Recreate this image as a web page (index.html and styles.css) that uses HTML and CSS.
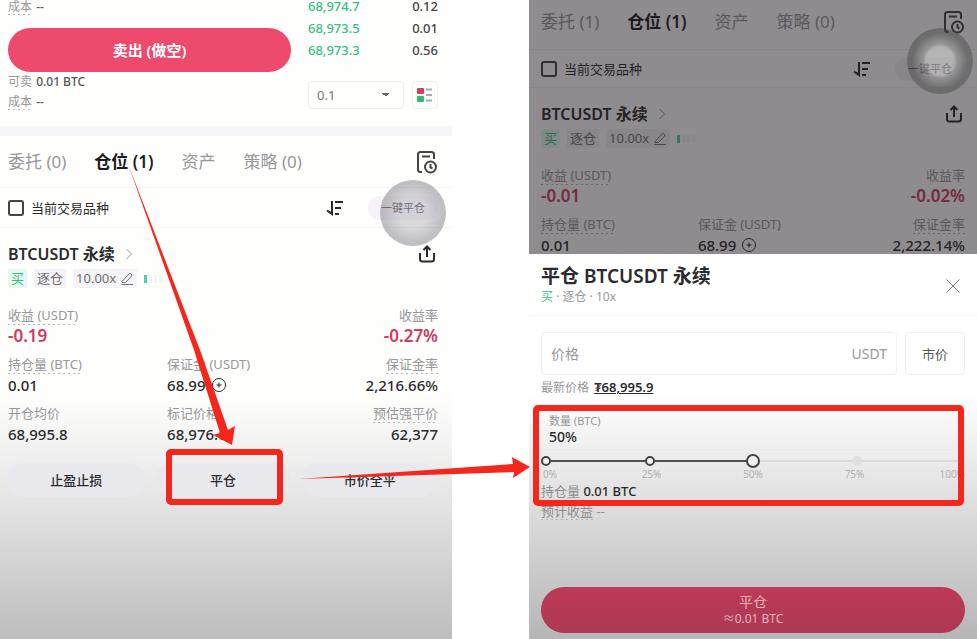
FILE: index.html
```html
<!DOCTYPE html>
<html lang="zh-CN">
<head>
    <meta charset="UTF-8">
    <meta name="viewport" content="width=device-width, initial-scale=1.0">
    <title>平仓 BTCUSDT 永续</title>
    <link rel="stylesheet" href="styles.css">
</head>
<body>

    <!-- shared icons -->
    <svg class="sprite" aria-hidden="true">
      <symbol id="i-history" viewBox="0 0 22 24">
        <path d="M6 22H4.500Q2 22 2 19.500V4.500Q2 2 4.500 2H15.500Q18 2 18 4.500V9M6 6.500H14" />
        <circle cx="14.500" cy="17" r="5.500" />
        <path d="M14.500 14V17.500L16.500 18.500" />
      </symbol>
      <symbol id="i-sort" viewBox="0 0 18 16">
        <path d="M6 1V14L1 10.500M6 14L3 11.500M9 2H17M9 8H15M9 14H13" />
      </symbol>
      <symbol id="i-share" viewBox="0 0 18 18">
        <path d="M2 8V14Q2 16.500 4.500 16.500H13.500Q16 16.500 16 14V8M9 12V2M5.500 5L9 1.500L12.500 5" />
      </symbol>
      <symbol id="i-edit" viewBox="0 0 14 14">
        <path d="M1.500 12.500H13M2 9.500L9 2Q10 1 11.200 2T11.300 4.300L5.500 10.500H2Z" />
      </symbol>
      <symbol id="i-chevron" viewBox="0 0 8 12">
        <path d="M1.500 1L6.500 6L1.500 11" />
      </symbol>
      <symbol id="i-add" viewBox="0 0 16 16">
        <circle cx="8" cy="8" r="6.500" />
        <path d="M5.500 8H10.500M8 5.500V10.500" />
      </symbol>
      <symbol id="i-close" viewBox="0 0 16 16">
        <path d="M1.500 1.500L14.500 14.500M14.500 1.500L1.500 14.500" />
      </symbol>
    </svg>

    <main class="board">

      <section class="phone phone-left">
        <div class="trade">
          <div class="order-side">
            <p class="line"><span class="hint">成本</span> <b>--</b></p>
            <button class="sell" type="button">卖出 (做空)</button>
            <p class="line"><span>可卖</span> <b>0.01 BTC</b></p>
            <p class="line"><span class="hint">成本</span> <b>--</b></p>
          </div>
          <div class="book">
            <table class="depth">
              <tr><td>68,974.7</td><td>0.12</td></tr>
              <tr><td>68,973.5</td><td>0.01</td></tr>
              <tr><td>68,973.3</td><td>0.56</td></tr>
            </table>
            <div class="book-tools">
              <select class="step" aria-label="深度"><option>0.1</option></select>
              <button class="layout-btn" type="button" aria-label="盘口样式">
                <svg width="16" height="16" viewBox="0 0 16 16">
                  <rect x="0" y="1" width="7" height="6" rx="1" fill="#d33f60" />
                  <rect x="0" y="9" width="7" height="6" rx="1" fill="#35b877" />
                  <path d="M9 2.500H15M9 8H15M9 13.500H15" stroke="#aaa" stroke-width="2" />
                </svg>
              </button>
            </div>
          </div>
        </div>

        <nav class="tabs">
          <button type="button">委托 (0)</button>
          <button type="button" class="active">仓位 (1)</button>
          <button type="button">资产</button>
          <button type="button">策略 (0)</button>
          <button type="button" class="history" aria-label="历史"><svg class="icon" width="22" height="24"><use href="#i-history" /></svg></button>
        </nav>

        <div class="filter">
          <label><input type="checkbox"> 当前交易品种</label>
          <button type="button" class="sort" aria-label="排序"><svg class="icon" width="18" height="16"><use href="#i-sort" /></svg></button>
          <button type="button" class="close-all">一键平仓</button>
          <span class="touch"></span>
        </div>

        <article class="position">
          <header>
            <a href="#">BTCUSDT 永续 <svg class="icon chevron" width="8" height="12"><use href="#i-chevron" /></svg></a>
            <button type="button" aria-label="分享"><svg class="icon" width="18" height="18"><use href="#i-share" /></svg></button>
          </header>
          <div class="tags">
            <span class="buy">买</span>
            <span>逐仓</span>
            <button type="button">10.00x <svg class="icon" width="14" height="14"><use href="#i-edit" /></svg></button>
            <i class="risk"></i>
          </div>
          <dl class="stats">
            <div><dt class="hint">收益 (USDT)</dt><dd class="loss">-0.19</dd></div>
            <div class="end"><dt>收益率</dt><dd class="loss">-0.27%</dd></div>
            <div><dt class="hint">持仓量 (BTC)</dt><dd>0.01</dd></div>
            <div><dt>保证金 (USDT)</dt><dd>68.99 <svg class="icon" width="16" height="16"><use href="#i-add" /></svg></dd></div>
            <div class="end"><dt class="hint">保证金率</dt><dd>2,216.66%</dd></div>
            <div><dt>开仓均价</dt><dd>68,995.8</dd></div>
            <div><dt>标记价格</dt><dd>68,976.6</dd></div>
            <div class="end"><dt class="hint">预估强平价</dt><dd>62,377</dd></div>
          </dl>
          <div class="actions">
            <button type="button">止盈止损</button>
            <button type="button">平仓</button>
            <button type="button">市价全平</button>
          </div>
        </article>
      </section>

      <section class="phone phone-right">
        <div class="behind">
          <nav class="tabs">
            <button type="button">委托 (1)</button>
            <button type="button" class="active">仓位 (1)</button>
            <button type="button">资产</button>
            <button type="button">策略 (0)</button>
            <button type="button" class="history" aria-label="历史"><svg class="icon" width="22" height="24"><use href="#i-history" /></svg></button>
          </nav>

          <div class="filter">
            <label><input type="checkbox"> 当前交易品种</label>
            <button type="button" class="sort" aria-label="排序"><svg class="icon" width="18" height="16"><use href="#i-sort" /></svg></button>
            <button type="button" class="close-all">一键平仓</button>
            <span class="touch touch-dark"></span>
          </div>

          <article class="position">
            <header>
              <a href="#">BTCUSDT 永续 <svg class="icon chevron" width="8" height="12"><use href="#i-chevron" /></svg></a>
              <button type="button" aria-label="分享"><svg class="icon" width="18" height="18"><use href="#i-share" /></svg></button>
            </header>
            <div class="tags">
              <span class="buy">买</span>
              <span>逐仓</span>
              <button type="button">10.00x <svg class="icon" width="14" height="14"><use href="#i-edit" /></svg></button>
              <i class="risk"></i>
            </div>
            <dl class="stats">
              <div><dt class="hint">收益 (USDT)</dt><dd class="loss">-0.01</dd></div>
              <div class="end"><dt>收益率</dt><dd class="loss">-0.02%</dd></div>
              <div><dt class="hint">持仓量 (BTC)</dt><dd>0.01</dd></div>
              <div><dt>保证金 (USDT)</dt><dd>68.99 <svg class="icon" width="16" height="16"><use href="#i-add" /></svg></dd></div>
              <div class="end"><dt class="hint">保证金率</dt><dd>2,222.14%</dd></div>
            </dl>
          </article>
        </div>

        <form class="sheet">
          <header class="sheet-head">
            <div>
              <h2>平仓 BTCUSDT 永续</h2>
              <p><span class="green">买</span> · 逐仓 · 10x</p>
            </div>
            <button type="button" aria-label="关闭"><svg class="icon" width="16" height="16"><use href="#i-close" /></svg></button>
          </header>

          <div class="price-row">
            <label class="price"><input type="text" placeholder="价格" aria-label="价格"> USDT</label>
            <button type="button">市价</button>
          </div>
          <p class="last">最新价格 <a href="#">₮68,995.9</a></p>

          <div class="amount">
            <label for="amount">数量 (BTC)</label>
            <output for="amount">50%</output>
          </div>
          <div class="slider">
            <input type="range" id="amount" min="0" max="100" value="50">
            <div class="ticks"><i class="on"></i><i class="on"></i><i></i><i></i><i></i></div>
          </div>
          <div class="scale"><span>0%</span><span>25%</span><span>50%</span><span>75%</span><span>100%</span></div>

          <p class="info">持仓量 <b>0.01 BTC</b></p>
          <p class="info"><span class="hint">预计收益</span> --</p>

          <button class="submit" type="submit"><span>平仓</span><small>≈0.01 BTC</small></button>
        </form>
      </section>

      <!-- step markers drawn over both screens -->
      <svg class="marks" viewBox="0 0 977 639" aria-hidden="true">
        <rect x="169" y="452" width="111" height="50" rx="2" />
        <rect x="536" y="408" width="425" height="95" rx="2" />
        <path d="M128 164L200 350L228 430L235 426L232 445L213 435L220 433L194 350Z" />
        <path d="M299 479L513 464L512 457L530 467L513 478L514 472Z" />
      </svg>
    </main>

</body>
</html>
```
FILE: styles.css
```css
:root {
  --text: #2b2b2e;
  --muted: #98979a;
  --pink: #ed4a6e;
  --green: #35c184;
  --mark: #f5261b;
}

* {
  box-sizing: border-box;
}

body {
  margin: 0;
  background: #fff;
  color: var(--text);
  font-family: "Noto Sans", "Noto Sans CJK SC", sans-serif;
  font-size: 13px;
  line-height: 20px;
}

button,
input,
select {
  font: inherit;
  color: inherit;
}

button {
  padding: 0;
  border: 0;
  background: none;
  cursor: pointer;
}

a {
  color: inherit;
  text-decoration: none;
}

p,
h2,
dl,
dd {
  margin: 0;
}

.sprite {
  position: absolute;
  width: 0;
  height: 0;
}

.icon {
  display: block;
  fill: none;
  stroke: currentColor;
  stroke-width: 2;
}

.board {
  position: relative;
  display: grid;
  grid-template-columns: 452fr 448fr;
  column-gap: 77px;
  min-height: 100vh;
  overflow: hidden;
}

.phone {
  display: flex;
  flex-direction: column;
  min-width: 0;
}

.phone-left {
  background: linear-gradient(#fefefd 62%, #e2e2e2 80%, #bdbdbd);
}

/* order form and book */
.trade {
  display: flex;
  gap: 17px;
  margin-top: -3px;
  padding: 0 14px 14px 8px;
  border-bottom: 10px solid #f8f6fb;
}

.order-side {
  flex: 1;
}

.line {
  color: var(--muted);
  font-size: 12px;
}

.line b {
  margin-left: 1px;
  color: #555;
  font-weight: 500;
}

.hint {
  background: repeating-linear-gradient(90deg, #b4b4b6 0 2px, transparent 2px 5px) bottom / 100% 1px no-repeat;
}

.sell {
  display: block;
  width: 100%;
  height: 44px;
  margin: 11px 0 0;
  border-radius: 22px;
  background: var(--pink);
  color: #fff;
  font-size: 15px;
  font-weight: 600;
}

.book {
  width: 130px;
}

.depth {
  width: 100%;
  margin-top: -2px;
  border-collapse: collapse;
  font-weight: 500;
  line-height: 22px;
}

.depth td {
  padding: 0;
  color: var(--green);
}

.depth td + td {
  color: #444;
  text-align: right;
}

.book-tools {
  display: flex;
  gap: 8px;
  margin-top: 20px;
}

.step {
  flex: 1;
  height: 28px;
  padding: 0 8px;
  border: 1px solid #ededf0;
  border-radius: 4px;
  appearance: none;
  background-color: transparent;
  background-image: linear-gradient(to top right, transparent 50%, #666 50%), linear-gradient(to top left, transparent 50%, #666 50%);
  background-position: right 17px center, right 13px center;
  background-repeat: no-repeat;
  background-size: 4px 4px;
  color: #777;
}

.layout-btn {
  display: grid;
  place-items: center;
  width: 26px;
  height: 28px;
  border: 1px solid #f1f1f3;
  border-radius: 4px;
}

/* tabs */
.tabs {
  display: flex;
  align-items: center;
  gap: 28px;
  height: 52px;
  padding: 0 14px 0 8px;
  border-bottom: 1px solid #f3f3f4;
  color: var(--muted);
  font-size: 17px;
}

.tabs .active {
  color: #1c1c1e;
  font-weight: 600;
}

.tabs .history {
  margin-left: auto;
  color: #444;
}

.filter {
  position: relative;
  display: flex;
  align-items: center;
  height: 40px;
  padding: 0 14px 0 8px;
  border-bottom: 1px solid #f3f3f4;
}

.filter label {
  display: flex;
  align-items: center;
  gap: 7px;
  flex: 1;
}

.filter input {
  width: 16px;
  height: 16px;
  margin: 0;
  border: 2px solid #444;
  border-radius: 3px;
  appearance: none;
}

.close-all {
  width: 70px;
  height: 24px;
  margin-left: 24px;
  border-radius: 12px;
  background: #f5f3f8;
  color: #555;
  font-size: 11px;
}

.touch {
  position: absolute;
  z-index: 1;
  top: -8px;
  right: 6px;
  width: 66px;
  height: 66px;
  border-radius: 50%;
  background: radial-gradient(closest-side, rgba(160, 157, 165, .4) 45%, rgba(130, 127, 135, .5) 90%);
}

.touch-dark {
  top: -22px;
  right: 4px;
  background: radial-gradient(closest-side, rgba(255, 255, 255, .35) 42%, rgba(160, 160, 160, .45) 52%, rgba(70, 70, 70, .45) 85%);
}

/* position card */
.position {
  padding: 16px 14px 0 8px;
}

.position header {
  display: flex;
  align-items: center;
  justify-content: space-between;
}

.position header a {
  display: flex;
  align-items: center;
  gap: 10px;
  font-size: 16px;
  font-weight: 600;
}

.position header button {
  margin-right: 2px;
}

.chevron {
  color: var(--muted);
  stroke-width: 1;
}

.tags {
  display: flex;
  align-items: center;
  gap: 7px;
  margin-top: 5px;
  color: #707074;
  line-height: 19px;
}

.tags span,
.tags button {
  padding: 0 3px;
  background: #f4f3f7;
  border-radius: 2px;
}

.tags button {
  display: flex;
  align-items: center;
  gap: 4px;
}

.tags .icon {
  stroke-width: 1;
}

.tags .buy {
  background: #e6f8ef;
  color: var(--green);
}

.risk {
  width: 18px;
  height: 8px;
  background: linear-gradient(90deg, #4ccfae 3px, transparent 3px 5px, #eef5f4 5px 8px, transparent 8px 10px, #eef5f4 10px 13px, transparent 13px 15px, #eef5f4 15px);
}

.stats {
  display: grid;
  grid-template-columns: 37% 1fr auto;
  row-gap: 7px;
  margin-top: 17px;
}

.stats > div:first-child {
  grid-column: span 2;
}

.stats dt {
  width: fit-content;
  color: var(--muted);
}

.stats dd {
  display: flex;
  align-items: center;
  gap: 5px;
  font-size: 15px;
  font-weight: 500;
  line-height: 22px;
}

.stats dd .icon {
  stroke-width: 1;
}

.stats .loss {
  color: #d03b62;
  font-size: 17px;
  font-weight: 600;
}

.stats .end dt {
  margin-left: auto;
}

.stats .end dd {
  justify-content: flex-end;
}

.actions {
  display: grid;
  grid-template-columns: repeat(3, 1fr);
  gap: 10px;
  margin-top: 18px;
}

.actions button {
  height: 34px;
  border-radius: 17px;
  background: #e9e8ed;
  font-weight: 500;
}

/* dimmed page behind the sheet */
.behind {
  position: relative;
  height: 254px;
  overflow: hidden;
}

.behind::after {
  content: "";
  position: absolute;
  inset: 0;
  background: rgba(30, 25, 30, .5);
}

.behind .tabs {
  height: 50px;
  padding: 0 12px 6px;
}

.behind .filter,
.behind .position {
  padding-left: 12px;
  padding-right: 12px;
}

.behind .filter {
  height: 38px;
}

/* close position sheet */
.sheet {
  flex: 1;
  display: flex;
  flex-direction: column;
  padding: 0 12px 6px;
  background: linear-gradient(#fff 36%, #e4e4e4 60%, #cdcdcd 80%, #b6b6b6);
}

.sheet-head {
  display: flex;
  align-items: center;
  justify-content: space-between;
  height: 62px;
  margin: 0 -12px;
  padding: 2px 16px 0 12px;
  border-bottom: 1px solid #f3f3f4;
}

.sheet-head h2 {
  font-size: 19px;
  font-weight: 600;
  line-height: 22px;
}

.sheet-head p {
  color: var(--muted);
  font-size: 12px;
}

.sheet-head .icon {
  color: #777;
  stroke-width: 1;
}

.green {
  color: var(--green);
}

.price-row {
  display: flex;
  gap: 8px;
  height: 43px;
  margin-top: 16px;
}

.price {
  flex: 1;
  display: flex;
  align-items: center;
  padding: 0 9px;
  border: 1px solid #f0f0f1;
  border-radius: 4px;
  color: var(--muted);
  font-size: 14px;
}

.price input {
  flex: 1;
  min-width: 0;
  padding: 0;
  border: 0;
  outline: 0;
  background: none;
}

.price input::placeholder {
  color: var(--muted);
}

.price-row button {
  width: 60px;
  border: 1px solid #f0f0f1;
  border-radius: 4px;
  color: #555;
}

.last {
  margin-top: 2px;
  color: var(--muted);
  font-size: 12px;
}

.last a {
  margin-left: 2px;
  color: var(--text);
  font-size: 13px;
  font-weight: 600;
  text-decoration: underline;
}

.amount {
  display: flex;
  flex-direction: column;
  margin-top: 15px;
  padding: 0 8px 4px;
  border-bottom: 1px solid #e9e9e9;
  line-height: 16px;
}

.amount label {
  color: var(--muted);
  font-size: 11px;
}

.amount output {
  font-size: 14px;
  font-weight: 500;
}

.slider {
  position: relative;
  height: 14px;
  margin-top: 4px;
}

.slider input {
  display: block;
  width: 100%;
  height: 14px;
  margin: 0;
  appearance: none;
  background: linear-gradient(90deg, #505052 50%, #dadada 50%) center / calc(100% - 10px) 2px no-repeat;
}

.slider input::-webkit-slider-thumb {
  width: 14px;
  height: 14px;
  border: 2px solid #444;
  border-radius: 50%;
  appearance: none;
  background: #f2f2f2;
}

.ticks {
  position: absolute;
  inset: 2px 0;
  display: flex;
  justify-content: space-between;
  pointer-events: none;
}

.ticks i {
  width: 10px;
  height: 10px;
  border-radius: 50%;
}

.ticks .on {
  border: 2px solid #444;
  background: #f2f2f2;
}

.ticks i:nth-child(4) {
  background: #dedede;
}

.scale {
  display: flex;
  justify-content: space-between;
  color: #b0b0b2;
  font-size: 10px;
  line-height: 12px;
}

.scale span {
  display: flex;
  justify-content: center;
  width: 18px;
}

.scale span:last-child {
  justify-content: flex-end;
}

.info {
  color: #8e8e90;
}

.scale + .info {
  margin-top: 1px;
}

.info b {
  color: var(--text);
  font-weight: 500;
}

.submit {
  display: flex;
  flex-direction: column;
  align-items: center;
  justify-content: center;
  height: 46px;
  margin-top: auto;
  border-radius: 23px;
  background: linear-gradient(#bd3957, #ad3953);
  color: #e5b3be;
  font-size: 14px;
  line-height: 18px;
}

.submit small {
  font-size: 12px;
  line-height: 16px;
}

/* red boxes and arrows */
.marks {
  position: absolute;
  z-index: 2;
  top: 0;
  left: 0;
  width: 100%;
  pointer-events: none;
}

.marks rect {
  fill: none;
  stroke: var(--mark);
  stroke-width: 6;
}

.marks path {
  fill: var(--mark);
}
```
